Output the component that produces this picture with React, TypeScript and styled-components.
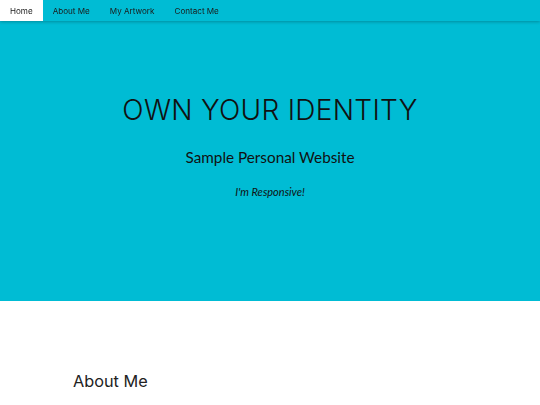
import React from "react";
import styled, { createGlobalStyle } from "styled-components";

const GlobalStyle = createGlobalStyle`
  html, body {
    margin: 0;
    padding: 0;
    background: #fff;
  }
  body {
    font-family: "Lato", "Open Sans", sans-serif;
    color: #111;
  }
`;

const NavBar = styled.nav`
  position: fixed;
  top: 0;
  left: 0;
  right: 0;
  height: 21px;
  display: flex;
  background: #00bcd4;
  box-shadow: 0 1px 3px rgba(0, 0, 0, 0.25);
  z-index: 10;
`;

const NavItem = styled.a<{ $active?: boolean }>`
  display: flex;
  align-items: center;
  padding: 0 10px;
  font-family: "Inter", "Open Sans", sans-serif;
  font-size: 8.1px;
  color: #1a1a1a;
  text-decoration: none;
  background: ${(p) => (p.$active ? "#fff" : "transparent")};
`;

const Hero = styled.header`
  height: 301px;
  background: #00bcd4;
  display: flex;
  flex-direction: column;
  align-items: center;
  padding-top: 93px;
  box-sizing: border-box;
`;

const Title = styled.h1`
  margin: 0;
  font-family: "Inter", "Open Sans", sans-serif;
  font-weight: 300;
  font-size: 28px;
  letter-spacing: 0.3px;
  color: #111;
`;

const Subtitle = styled.h2`
  margin: 21px 0 0;
  font-family: "Lato", sans-serif;
  font-weight: 400;
  font-size: 15.3px;
  color: #111;
`;

const Tagline = styled.p`
  margin: 19px 0 0;
  font-family: "Lato", sans-serif;
  font-style: italic;
  font-size: 11px;
  color: #111;
`;

const Section = styled.section`
  padding: 70px 73px 40px;
`;

const SectionTitle = styled.h3`
  margin: 0;
  font-family: "Inter", "Open Sans", sans-serif;
  font-weight: 400;
  font-size: 16.3px;
  color: #222;
`;

const links = ["Home", "About Me", "My Artwork", "Contact Me"];

export default function App() {
  return (
    <>
      <GlobalStyle />
      <NavBar>
        {links.map((l, i) => (
          <NavItem key={l} href="#" $active={i === 0}>
            {l}
          </NavItem>
        ))}
      </NavBar>
      <Hero>
        <Title>OWN YOUR IDENTITY</Title>
        <Subtitle>Sample Personal Website</Subtitle>
        <Tagline>I'm Responsive!</Tagline>
      </Hero>
      <Section>
        <SectionTitle>About Me</SectionTitle>
      </Section>
    </>
  );
}
